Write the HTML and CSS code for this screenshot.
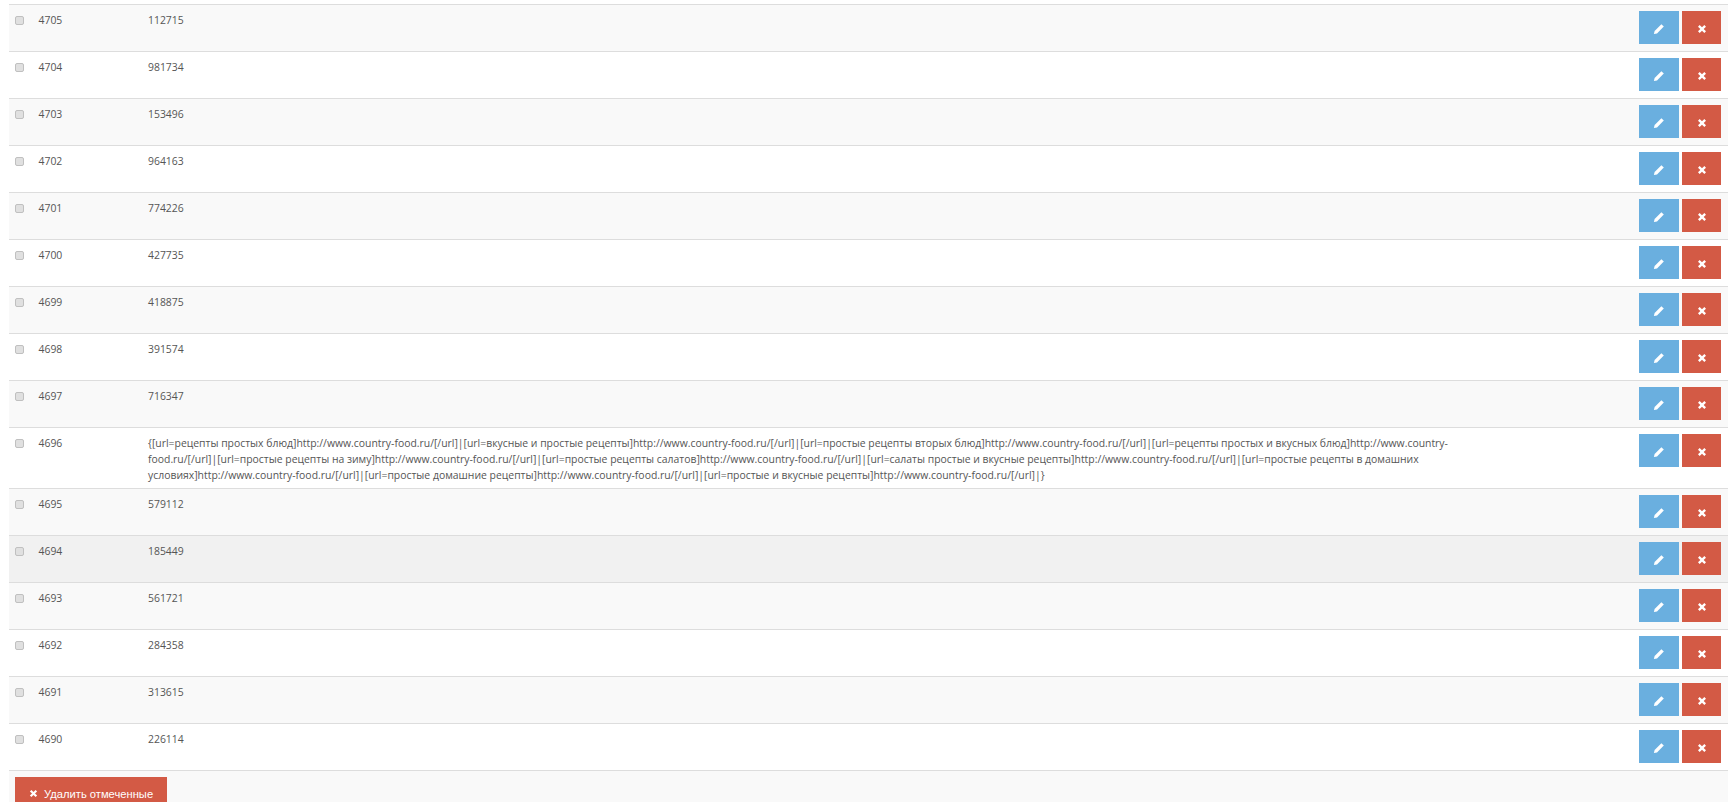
FILE: index.html
```html
<!DOCTYPE html>
<html lang="ru">
<head>
<meta charset="utf-8">
<title>Список</title>
<link rel="stylesheet" href="styles.css">
</head>
<body>
<svg class="sprite" width="0" height="0" aria-hidden="true">
  <symbol id="i-pencil" viewBox="0 0 12 12"><path d="M8.4 1.2 10.8 3.6 4 10.4.9 11.1 1.6 8Z"/></symbol>
  <symbol id="i-times" viewBox="0 0 12 12"><path d="M3.2 1.2 6 4 8.8 1.2 10.8 3.2 8 6l2.8 2.8-2 2L6 8l-2.8 2.8-2-2L4 6 1.2 3.2Z"/></symbol>
</svg>
<main class="page">
<table class="grid">
  <colgroup><col class="c-check"><col class="c-id"><col class="c-text"><col class="c-actions"></colgroup>
  <tbody>
    <tr><td><input type="checkbox" class="check"></td><td>4705</td><td>112715</td><td class="actions"><div class="btns"><a class="btn edit"><svg><use href="#i-pencil"/></svg></a><a class="btn del"><svg><use href="#i-times"/></svg></a></div></td></tr>
    <tr><td><input type="checkbox" class="check"></td><td>4704</td><td>981734</td><td class="actions"><div class="btns"><a class="btn edit"><svg><use href="#i-pencil"/></svg></a><a class="btn del"><svg><use href="#i-times"/></svg></a></div></td></tr>
    <tr><td><input type="checkbox" class="check"></td><td>4703</td><td>153496</td><td class="actions"><div class="btns"><a class="btn edit"><svg><use href="#i-pencil"/></svg></a><a class="btn del"><svg><use href="#i-times"/></svg></a></div></td></tr>
    <tr><td><input type="checkbox" class="check"></td><td>4702</td><td>964163</td><td class="actions"><div class="btns"><a class="btn edit"><svg><use href="#i-pencil"/></svg></a><a class="btn del"><svg><use href="#i-times"/></svg></a></div></td></tr>
    <tr><td><input type="checkbox" class="check"></td><td>4701</td><td>774226</td><td class="actions"><div class="btns"><a class="btn edit"><svg><use href="#i-pencil"/></svg></a><a class="btn del"><svg><use href="#i-times"/></svg></a></div></td></tr>
    <tr><td><input type="checkbox" class="check"></td><td>4700</td><td>427735</td><td class="actions"><div class="btns"><a class="btn edit"><svg><use href="#i-pencil"/></svg></a><a class="btn del"><svg><use href="#i-times"/></svg></a></div></td></tr>
    <tr><td><input type="checkbox" class="check"></td><td>4699</td><td>418875</td><td class="actions"><div class="btns"><a class="btn edit"><svg><use href="#i-pencil"/></svg></a><a class="btn del"><svg><use href="#i-times"/></svg></a></div></td></tr>
    <tr><td><input type="checkbox" class="check"></td><td>4698</td><td>391574</td><td class="actions"><div class="btns"><a class="btn edit"><svg><use href="#i-pencil"/></svg></a><a class="btn del"><svg><use href="#i-times"/></svg></a></div></td></tr>
    <tr><td><input type="checkbox" class="check"></td><td>4697</td><td>716347</td><td class="actions"><div class="btns"><a class="btn edit"><svg><use href="#i-pencil"/></svg></a><a class="btn del"><svg><use href="#i-times"/></svg></a></div></td></tr>
    <tr><td><input type="checkbox" class="check"></td><td>4696</td><td>{[url=рецепты простых блюд]http://www.country-food.ru/[/url]|[url=вкусные и простые рецепты]http://www.country-food.ru/[/url]|[url=простые рецепты вторых блюд]http://www.country-food.ru/[/url]|[url=рецепты простых и вкусных блюд]http://www.country-food.ru/[/url]|[url=простые рецепты на зиму]http://www.country-food.ru/[/url]|[url=простые рецепты салатов]http://www.country-food.ru/[/url]|[url=салаты простые и вкусные рецепты]http://www.country-food.ru/[/url]|[url=простые рецепты в домашних условиях]http://www.country-food.ru/[/url]|[url=простые домашние рецепты]http://www.country-food.ru/[/url]|[url=простые и вкусные рецепты]http://www.country-food.ru/[/url]|}</td><td class="actions"><div class="btns"><a class="btn edit"><svg><use href="#i-pencil"/></svg></a><a class="btn del"><svg><use href="#i-times"/></svg></a></div></td></tr>
    <tr><td><input type="checkbox" class="check"></td><td>4695</td><td>579112</td><td class="actions"><div class="btns"><a class="btn edit"><svg><use href="#i-pencil"/></svg></a><a class="btn del"><svg><use href="#i-times"/></svg></a></div></td></tr>
    <tr class="hover"><td><input type="checkbox" class="check"></td><td>4694</td><td>185449</td><td class="actions"><div class="btns"><a class="btn edit"><svg><use href="#i-pencil"/></svg></a><a class="btn del"><svg><use href="#i-times"/></svg></a></div></td></tr>
    <tr><td><input type="checkbox" class="check"></td><td>4693</td><td>561721</td><td class="actions"><div class="btns"><a class="btn edit"><svg><use href="#i-pencil"/></svg></a><a class="btn del"><svg><use href="#i-times"/></svg></a></div></td></tr>
    <tr><td><input type="checkbox" class="check"></td><td>4692</td><td>284358</td><td class="actions"><div class="btns"><a class="btn edit"><svg><use href="#i-pencil"/></svg></a><a class="btn del"><svg><use href="#i-times"/></svg></a></div></td></tr>
    <tr><td><input type="checkbox" class="check"></td><td>4691</td><td>313615</td><td class="actions"><div class="btns"><a class="btn edit"><svg><use href="#i-pencil"/></svg></a><a class="btn del"><svg><use href="#i-times"/></svg></a></div></td></tr>
    <tr><td><input type="checkbox" class="check"></td><td>4690</td><td>226114</td><td class="actions"><div class="btns"><a class="btn edit"><svg><use href="#i-pencil"/></svg></a><a class="btn del"><svg><use href="#i-times"/></svg></a></div></td></tr>
  </tbody>
  <tfoot>
    <tr><td colspan="4" class="foot"><button type="button" class="delete-all"><svg><use href="#i-times"/></svg>Удалить отмеченные</button></td></tr>
  </tfoot>
</table>
</main>
</body>
</html>
```

FILE: styles.css
```css
html, body {
  margin: 0;
  height: 100%;
  overflow: hidden;
  background: #fff;
}
.sprite { position: absolute; }
.page {
  padding: 4px 3px 0 9px;
  font-family: "Open Sans", "Noto Sans", sans-serif;
  font-size: 10.42px;
  line-height: 16px;
  color: #555;
}
.grid {
  width: 1719px;
  table-layout: fixed;
  border-collapse: separate;
  border-spacing: 0;
}
.c-check { width: 29.5px; }
.c-id { width: 109.5px; }
.c-text { width: 1340px; }
.grid td {
  padding: 7px 0 5px 0;
  vertical-align: top;
  border-top: 1px solid #ddd;
}
.grid tbody tr:nth-child(odd) td { background: #f9f9f9; }
.grid tbody tr.hover td { background: #f1f1f1; }
.grid td.actions { padding: 6px 7px 7px 0; }
.check {
  appearance: none;
  display: block;
  box-sizing: border-box;
  width: 9px;
  height: 9px;
  margin: 4px 0 0 6px;
  border: 1px solid #c0c0c0;
  border-radius: 2px;
  background: #e0e0e0;
}
.btns {
  display: flex;
  justify-content: flex-end;
  gap: 3px;
}
.btn {
  display: flex;
  align-items: center;
  justify-content: center;
  box-sizing: border-box;
  width: 40px;
  height: 33px;
  padding-top: 2px;
  fill: #fff;
}
.btn svg { width: 12px; height: 12px; }
.btn.del svg { width: 10px; height: 10px; }
.btn.edit { background: #6aafdf; }
.btn.del { width: 39px; background: #d35a45; }
.grid td.foot {
  padding: 6px 0 0 6px;
  height: 40px;
  background: #f9f9f9;
}
.delete-all {
  display: flex;
  align-items: center;
  gap: 6px;
  height: 33px;
  width: 152px;
  padding: 0 0 0 14px;
  border: 0;
  background: #d35a45;
  color: #fff;
  fill: #fff;
  font-family: "Liberation Sans", Arial, sans-serif;
  font-size: 11.2px;
}
.delete-all svg { width: 9px; height: 9px; flex: none; }
```
